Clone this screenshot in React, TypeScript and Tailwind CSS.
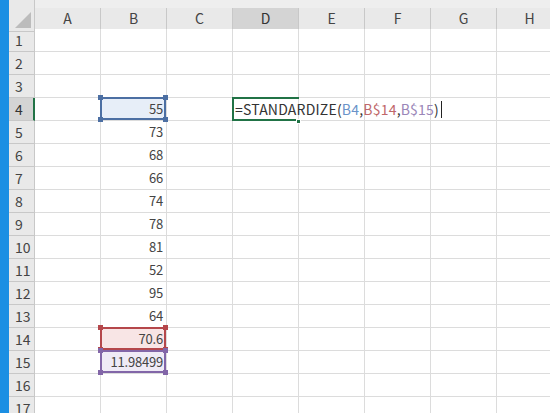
const COLS = ["A", "B", "C", "D", "E", "F", "G", "H"];
const ROWS = Array.from({ length: 17 }, (_, i) => i + 1);

const VALUES: Record<number, string> = {
  4: "55",
  5: "73",
  6: "68",
  7: "66",
  8: "74",
  9: "78",
  10: "81",
  11: "52",
  12: "95",
  13: "64",
  14: "70.6",
  15: "11.98499",
};

const font = { fontFamily: '"Noto Sans CJK JP", "Noto Sans", sans-serif' };

function RangeBox({ color, fill }: { color: string; fill: string }) {
  return (
    <div
      className="absolute -left-px -top-px right-0 bottom-0 z-10 pointer-events-none border-2"
      style={{ borderColor: color, background: fill }}
    >
      <span className="absolute -left-[4px] -top-[4px] w-[5px] h-[5px]" style={{ background: color }} />
      <span className="absolute -right-[4px] -top-[4px] w-[5px] h-[5px]" style={{ background: color }} />
      <span className="absolute -left-[4px] -bottom-[4px] w-[5px] h-[5px]" style={{ background: color }} />
      <span className="absolute -right-[4px] -bottom-[4px] w-[5px] h-[5px]" style={{ background: color }} />
    </div>
  );
}

function Cell({ row, col }: { row: number; col: string }) {
  const value = col === "B" ? VALUES[row] : undefined;
  const box =
    col === "B" && row === 4
      ? { color: "#4c6fa3", fill: "#e7eef8" }
      : col === "B" && row === 14
        ? { color: "#b5474b", fill: "#f8e5e5" }
        : col === "B" && row === 15
          ? { color: "#8266a8", fill: "#efebf6" }
          : null;
  const active = col === "D" && row === 4;

  return (
    <div className="relative h-[23px] border-r border-b border-[#dcdcdc] bg-white">
      {box && <RangeBox color={box.color} fill={box.fill} />}
      {value && (
        <div className="relative z-20 h-full flex items-center justify-end pr-[3px] text-[13px] tracking-[-0.2px] text-[#444]">
          {value}
        </div>
      )}
      {active && (
        <>
          <div className="absolute -left-px -top-px right-[-1px] -bottom-px z-10 border-l-2 border-t-2 border-b-2 border-[#217346]" />
          <span className="absolute right-[-3px] bottom-[-4px] z-20 w-[5px] h-[5px] bg-[#217346] border border-white" />
          <div className="absolute left-[2px] top-0 h-full z-30 flex items-center whitespace-nowrap text-[14px] tracking-[0.2px] text-[#333]">
            <span>=STANDARDIZE(</span>
            <span className="text-[#6a93c9]">B4</span>
            <span>,</span>
            <span className="text-[#c0676a]">B$14</span>
            <span>,</span>
            <span className="text-[#9a86b8]">B$15</span>
            <span>)</span>
            <span className="ml-[2px] w-px h-[17px] bg-[#222]" />
          </div>
        </>
      )}
    </div>
  );
}

export default function App() {
  return (
    <div className="w-[550px] h-[413px] overflow-hidden flex bg-white" style={font}>
      <div className="w-[9px] shrink-0 bg-[#1b8fe3]" />
      <div className="flex-1 flex flex-col">
        {/* column headers */}
        <div className="grid grid-cols-[26px_repeat(8,66px)] h-[29px] bg-[#eeeeee]">
          <div className="relative border-r border-b border-[#c8c8c8] bg-[#e9e9e9]">
            <svg className="absolute right-[3px] bottom-[3px]" width="16" height="16" viewBox="0 0 16 16">
              <polygon points="16,0 16,16 0,16" fill="#bcbcbc" />
            </svg>
          </div>
          {COLS.map((c) => (
            <div
              key={c}
              className={
                c === "D"
                  ? "flex items-end justify-center pb-[1px] mt-[8px] border-r border-[#c8c8c8] border-b-2 border-b-[#217346] bg-[#d4d4d4] text-[14px] text-[#333]"
                  : "flex items-end justify-center pb-[2px] mt-[8px] border-r border-b border-[#c8c8c8] bg-[#e9e9e9] text-[14px] text-[#444]"
              }
            >
              {c}
            </div>
          ))}
        </div>
        {/* rows */}
        <div className="grid grid-cols-[26px_repeat(8,66px)]">
          {ROWS.map((r) => (
            <div key={r} className="contents">
              <div
                className={
                  r === 4
                    ? "h-[23px] flex items-center pl-[6px] border-b border-[#c8c8c8] border-r-2 border-r-[#217346] bg-[#d4d4d4] text-[14px] text-[#333]"
                    : "h-[23px] flex items-center pl-[6px] border-r border-b border-[#c8c8c8] bg-[#e9e9e9] text-[14px] text-[#444]"
                }
              >
                {r}
              </div>
              {COLS.map((c) => (
                <Cell key={c} row={r} col={c} />
              ))}
            </div>
          ))}
        </div>
      </div>
    </div>
  );
}
